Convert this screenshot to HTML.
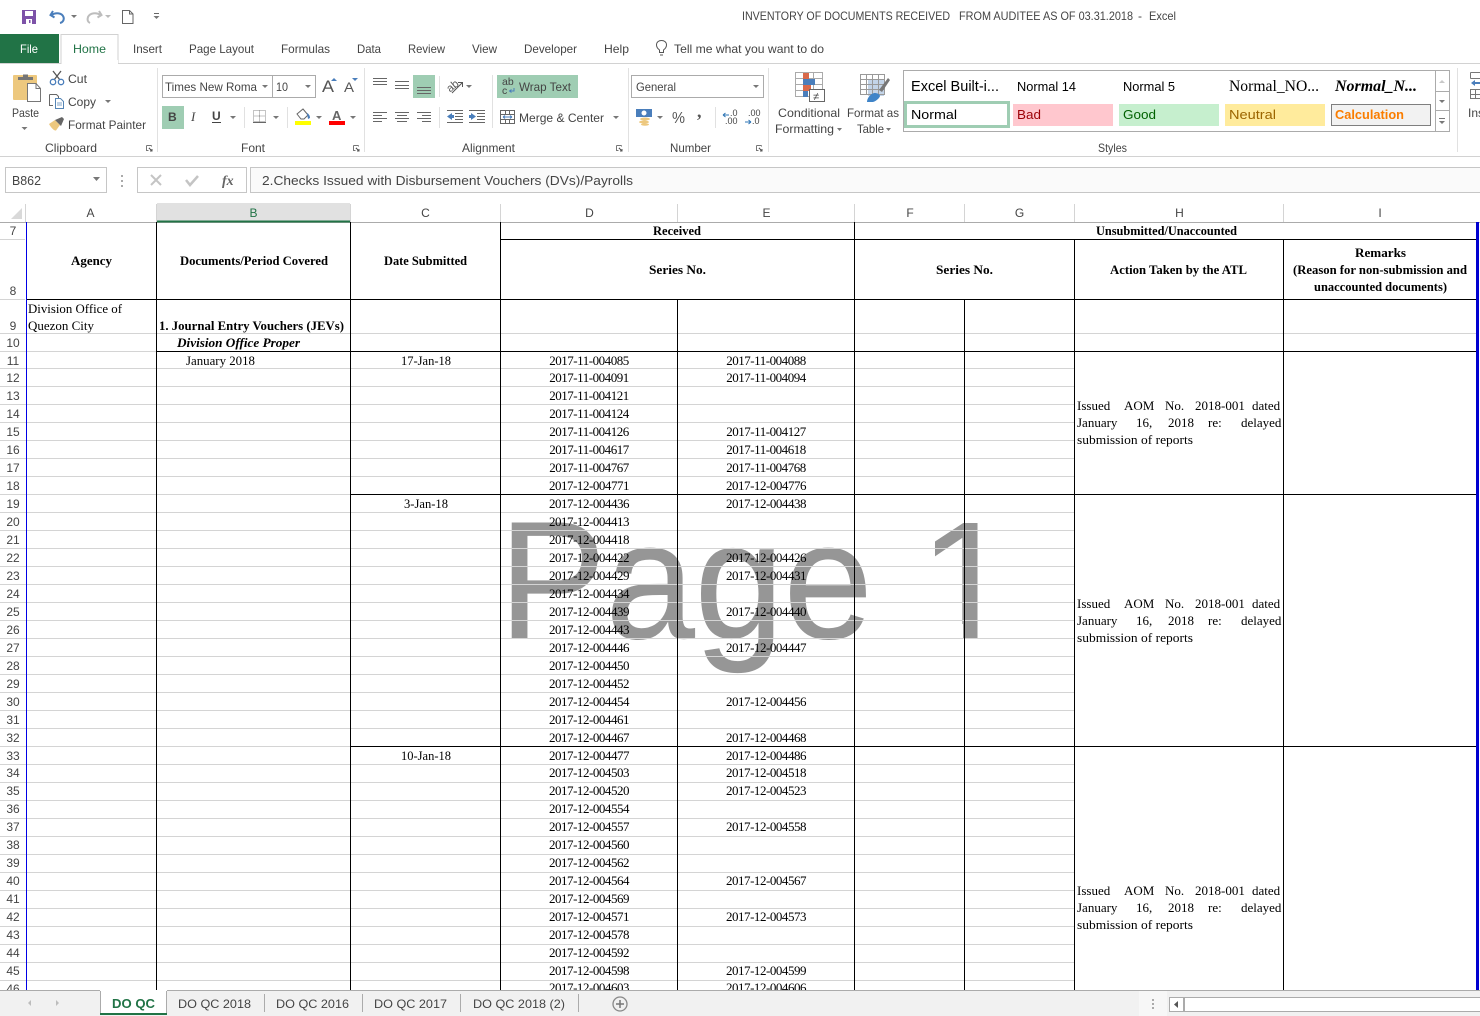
<!DOCTYPE html>
<html><head><meta charset="utf-8"><title>INVENTORY OF DOCUMENTS RECEIVED</title>
<style>
html,body{margin:0;padding:0;background:#fff;width:1480px;height:1016px;overflow:hidden}
svg{display:block}
text{white-space:pre}
.s{font:12px "Liberation Sans",sans-serif;fill:#444}
.t{font:13px "Liberation Serif",serif;fill:#000}
.d{letter-spacing:-.47px;text-anchor:middle}
.b{font:bold 13px "Liberation Serif",serif;fill:#000}
.h{font:12px "Liberation Sans",sans-serif;fill:#444;text-anchor:middle}
.l{shape-rendering:crispEdges}
</style></head><body>
<svg xmlns="http://www.w3.org/2000/svg" width="1480" height="1016" viewBox="0 0 1480 1016">
<defs><path id="c" d="M0 0h6l-3 3z" fill="#777"/>
<clipPath id="one"><rect x="900" y="523" width="77.500" height="101"/><rect x="963" y="620" width="14.500" height="18"/></clipPath></defs>
<rect width="1480" height="1016" fill="#fff"/>

<!-- watermark -->
<g font-family="'Liberation Sans',sans-serif" font-size="160" fill="#969696" stroke="#969696" stroke-width=".8">
<text transform="translate(499 638) scale(1 1.045)">Page</text>
<g clip-path="url(#one)"><text transform="translate(918.500 638) scale(1.1 1.045)">1</text></g></g>

<!-- grey grid -->
<g class="l" stroke="#d4d4d4" fill="none">
<path d="M0 333.5H1476M0 351.5H157M0 239.5H25M0 299.5H25M0 494.5H350M0 746.5H350"/>
<path d="M0 368.5H1074M0 386.5H1074M0 404.5H1074M0 422.5H1074M0 440.5H1074M0 458.5H1074M0 476.5H1074M0 512.5H1074M0 530.5H1074M0 548.5H1074M0 566.5H1074M0 584.5H1074M0 602.5H1074M0 620.5H1074M0 638.5H1074M0 656.5H1074M0 674.5H1074M0 692.5H1074M0 710.5H1074M0 728.5H1074M0 764.5H1074M0 782.5H1074M0 800.5H1074M0 818.5H1074M0 836.5H1074M0 854.5H1074M0 872.5H1074M0 890.5H1074M0 908.5H1074M0 926.5H1074M0 944.5H1074M0 962.5H1074M0 980.5H1074"/>
<path d="M156.500 204V222M350.500 204V222M500.500 204V222M677.500 204V222M854.500 204V222M964.500 204V222M1074.500 204V222M1283.500 204V222M25.500 204V222"/>
</g>
<!-- headers -->
<rect x="157" y="203" width="193" height="18" fill="#e1e1e1"/>
<path d="M11 219h11v-11z" fill="#d9d9d9"/>
<g class="l" fill="none">
<path d="M0 222.500H1480" stroke="#ababab"/>
<path d="M157 221.500H350" stroke="#217346" stroke-width="2"/>
<g stroke="#000">
<path d="M156.500 222V990M350.500 222V990M500.500 222V990M854.500 222V990M677.500 299V990M964.500 299V990M1074.500 239V990M1283.500 239V990"/>
<path d="M27 299.500H1476M500 239.500H1476M157 351.500H1476M350 494.500H1476M350 746.500H1476"/>
</g>
</g>
<rect x="26" y="222" width="1" height="768" fill="#0000e6"/>
<rect x="1476" y="222" width="3" height="768" fill="#0000d0"/>

<g class="h"><text x="90.500" y="217">A</text><text x="253.500" y="217" style="fill:#217346">B</text><text x="425.500" y="217">C</text><text x="589.500" y="217">D</text><text x="766.500" y="217">E</text><text x="910" y="217">F</text><text x="1019.500" y="217">G</text><text x="1179.500" y="217">H</text><text x="1380" y="217">I</text></g>

<!-- row numbers -->
<g class="h">
<text x="13" y="235">7</text><text x="13" y="295">8</text><text x="13" y="330">9</text><text x="13" y="347">10</text><text x="13" y="365">11</text><text x="13" y="382">12</text><text x="13" y="400">13</text><text x="13" y="418">14</text><text x="13" y="436">15</text><text x="13" y="454">16</text><text x="13" y="472">17</text><text x="13" y="490">18</text><text x="13" y="508">19</text><text x="13" y="526">20</text><text x="13" y="544">21</text><text x="13" y="562">22</text><text x="13" y="580">23</text><text x="13" y="598">24</text><text x="13" y="616">25</text><text x="13" y="634">26</text><text x="13" y="652">27</text><text x="13" y="670">28</text><text x="13" y="688">29</text><text x="13" y="706">30</text><text x="13" y="724">31</text><text x="13" y="742">32</text><text x="13" y="760">33</text><text x="13" y="777">34</text><text x="13" y="795">35</text><text x="13" y="813">36</text><text x="13" y="831">37</text><text x="13" y="849">38</text><text x="13" y="867">39</text><text x="13" y="885">40</text><text x="13" y="903">41</text><text x="13" y="921">42</text><text x="13" y="939">43</text><text x="13" y="957">44</text><text x="13" y="975">45</text><text x="13" y="993">46</text>
</g>

<!-- header cells -->
<g class="b">
<text x="71" y="265" textLength="41" lengthAdjust="spacingAndGlyphs">Agency</text>
<text x="180" y="265" textLength="148" lengthAdjust="spacingAndGlyphs">Documents/Period Covered</text>
<text x="384" y="265" textLength="83" lengthAdjust="spacingAndGlyphs">Date Submitted</text>
<text x="653" y="235" textLength="48" lengthAdjust="spacingAndGlyphs">Received</text>
<text x="1096" y="235" textLength="141" lengthAdjust="spacingAndGlyphs">Unsubmitted/Unaccounted</text>
<text x="649" y="274" textLength="57" lengthAdjust="spacingAndGlyphs">Series No.</text>
<text x="936" y="274" textLength="57" lengthAdjust="spacingAndGlyphs">Series No.</text>
<text x="1110" y="274" textLength="137" lengthAdjust="spacingAndGlyphs">Action Taken by the ATL</text>
<text x="1355" y="257" textLength="51" lengthAdjust="spacingAndGlyphs">Remarks</text>
<text x="1293" y="274" textLength="174" lengthAdjust="spacingAndGlyphs">(Reason for non-submission and</text>
<text x="1314" y="291" textLength="133" lengthAdjust="spacingAndGlyphs">unaccounted documents)</text>
</g>
<text class="t" x="28" y="313" textLength="94" lengthAdjust="spacingAndGlyphs">Division Office of</text>
<text class="t" x="28" y="330" textLength="66" lengthAdjust="spacingAndGlyphs">Quezon City</text>
<text class="b" x="159" y="330" textLength="185" lengthAdjust="spacingAndGlyphs">1. Journal Entry Vouchers (JEVs)</text>
<text class="b" x="177" y="347" style="font-style:italic" textLength="123" lengthAdjust="spacingAndGlyphs">Division Office Proper</text>
<text class="t" x="186" y="365" textLength="69" lengthAdjust="spacingAndGlyphs">January 2018</text>
<g class="t"><text x="401" y="365" textLength="50" lengthAdjust="spacingAndGlyphs">17-Jan-18</text><text x="404" y="508" textLength="44" lengthAdjust="spacingAndGlyphs">3-Jan-18</text><text x="401" y="760" textLength="50" lengthAdjust="spacingAndGlyphs">10-Jan-18</text></g>

<!-- D column -->
<g class="t d">
<text x="589" y="365">2017-11-004085</text><text x="589" y="382">2017-11-004091</text><text x="589" y="400">2017-11-004121</text><text x="589" y="418">2017-11-004124</text><text x="589" y="436">2017-11-004126</text><text x="589" y="454">2017-11-004617</text><text x="589" y="472">2017-11-004767</text><text x="589" y="490">2017-12-004771</text><text x="589" y="508">2017-12-004436</text><text x="589" y="526">2017-12-004413</text><text x="589" y="544">2017-12-004418</text><text x="589" y="562">2017-12-004422</text><text x="589" y="580">2017-12-004429</text><text x="589" y="598">2017-12-004434</text><text x="589" y="616">2017-12-004439</text><text x="589" y="634">2017-12-004443</text><text x="589" y="652">2017-12-004446</text><text x="589" y="670">2017-12-004450</text><text x="589" y="688">2017-12-004452</text><text x="589" y="706">2017-12-004454</text><text x="589" y="724">2017-12-004461</text><text x="589" y="742">2017-12-004467</text><text x="589" y="760">2017-12-004477</text><text x="589" y="777">2017-12-004503</text><text x="589" y="795">2017-12-004520</text><text x="589" y="813">2017-12-004554</text><text x="589" y="831">2017-12-004557</text><text x="589" y="849">2017-12-004560</text><text x="589" y="867">2017-12-004562</text><text x="589" y="885">2017-12-004564</text><text x="589" y="903">2017-12-004569</text><text x="589" y="921">2017-12-004571</text><text x="589" y="939">2017-12-004578</text><text x="589" y="957">2017-12-004592</text><text x="589" y="975">2017-12-004598</text><text x="589" y="992">2017-12-004603</text>
<!-- E column -->
<text x="766" y="365">2017-11-004088</text><text x="766" y="382">2017-11-004094</text><text x="766" y="436">2017-11-004127</text><text x="766" y="454">2017-11-004618</text><text x="766" y="472">2017-11-004768</text><text x="766" y="490">2017-12-004776</text><text x="766" y="508">2017-12-004438</text><text x="766" y="562">2017-12-004426</text><text x="766" y="580">2017-12-004431</text><text x="766" y="616">2017-12-004440</text><text x="766" y="652">2017-12-004447</text><text x="766" y="706">2017-12-004456</text><text x="766" y="742">2017-12-004468</text><text x="766" y="760">2017-12-004486</text><text x="766" y="777">2017-12-004518</text><text x="766" y="795">2017-12-004523</text><text x="766" y="831">2017-12-004558</text><text x="766" y="885">2017-12-004567</text><text x="766" y="921">2017-12-004573</text><text x="766" y="975">2017-12-004599</text><text x="766" y="992">2017-12-004606</text>
</g>

<!-- H merged text -->
<g class="t">
<text y="410"><tspan x="1077">Issued</tspan><tspan x="1124">AOM</tspan><tspan x="1165">No.</tspan><tspan x="1195">2018-001</tspan><tspan x="1252">dated</tspan></text>
<text y="427"><tspan x="1077">January</tspan><tspan x="1136">16,</tspan><tspan x="1168">2018</tspan><tspan x="1208">re:</tspan><tspan x="1241">delayed</tspan></text>
<text x="1077" y="444" textLength="116" lengthAdjust="spacingAndGlyphs">submission of reports</text>
<text y="608"><tspan x="1077">Issued</tspan><tspan x="1124">AOM</tspan><tspan x="1165">No.</tspan><tspan x="1195">2018-001</tspan><tspan x="1252">dated</tspan></text>
<text y="625"><tspan x="1077">January</tspan><tspan x="1136">16,</tspan><tspan x="1168">2018</tspan><tspan x="1208">re:</tspan><tspan x="1241">delayed</tspan></text>
<text x="1077" y="642" textLength="116" lengthAdjust="spacingAndGlyphs">submission of reports</text>
<text y="895"><tspan x="1077">Issued</tspan><tspan x="1124">AOM</tspan><tspan x="1165">No.</tspan><tspan x="1195">2018-001</tspan><tspan x="1252">dated</tspan></text>
<text y="912"><tspan x="1077">January</tspan><tspan x="1136">16,</tspan><tspan x="1168">2018</tspan><tspan x="1208">re:</tspan><tspan x="1241">delayed</tspan></text>
<text x="1077" y="929" textLength="116" lengthAdjust="spacingAndGlyphs">submission of reports</text>
</g>

<!-- ========== top chrome ========== -->
<rect y="0" width="1480" height="203" fill="#fff"/>
<g class="s">
<text x="742" y="20" textLength="208" lengthAdjust="spacingAndGlyphs">INVENTORY OF DOCUMENTS RECEIVED</text>
<text x="959" y="20" textLength="174" lengthAdjust="spacingAndGlyphs">FROM AUDITEE AS OF 03.31.2018</text>
<text x="1138" y="20">-</text>
<text x="1149" y="20" textLength="27" lengthAdjust="spacingAndGlyphs">Excel</text>
</g>

<!-- QAT -->
<path d="M22 10h14v14H22z" fill="#7d52a8"/><rect x="25" y="11" width="8" height="5" fill="#fff"/><rect x="26" y="19" width="6" height="5" fill="#fff"/><rect x="29" y="20" width="1.500" height="3" fill="#7d52a8"/>
<path d="M53 11l-2.500 4 4 2.500M51.500 15C56 12 62 13 63.500 17c1 3-1 5.500-3.500 6" fill="none" stroke="#4a7ebb" stroke-width="2"/>
<use href="#c" x="71" y="15"/>
<path d="M99 11l2.500 4-4 2.500M100.500 15C96 12 90 13 88 17c-1 3 0 5 2 6" fill="none" stroke="#bdbdbd" stroke-width="2"/>
<use href="#c" x="105" y="15" opacity=".5"/>
<path d="M122.500 10.500h7l3.500 3.500v9.500h-10.500zM129.500 10.500v3.500h3.500" fill="#fff" stroke="#666"/>
<path d="M154 13.500h5" stroke="#666" class="l"/><use href="#c" x="153.500" y="16"/>

<!-- Tabs -->
<rect x="0" y="34" width="59" height="29" fill="#217346"/>
<text x="20" y="53" font-family="'Liberation Sans',sans-serif" font-size="12" fill="#fff" textLength="18" lengthAdjust="spacingAndGlyphs">File</text>
<path class="l" d="M0 63.500H61V34.500H118V63.500H1480" fill="#fff" stroke="#d2d2d2"/>
<rect x="62" y="60" width="56" height="5" fill="#fff"/>
<text x="73" y="53" font-family="'Liberation Sans',sans-serif" font-size="12" fill="#217346" textLength="33" lengthAdjust="spacingAndGlyphs">Home</text>
<g class="s">
<text x="133" y="53" textLength="29" lengthAdjust="spacingAndGlyphs">Insert</text>
<text x="189" y="53" textLength="65" lengthAdjust="spacingAndGlyphs">Page Layout</text>
<text x="281" y="53" textLength="49" lengthAdjust="spacingAndGlyphs">Formulas</text>
<text x="357" y="53" textLength="24" lengthAdjust="spacingAndGlyphs">Data</text>
<text x="408" y="53" textLength="37" lengthAdjust="spacingAndGlyphs">Review</text>
<text x="472" y="53" textLength="25" lengthAdjust="spacingAndGlyphs">View</text>
<text x="524" y="53" textLength="53" lengthAdjust="spacingAndGlyphs">Developer</text>
<text x="604" y="53" textLength="25" lengthAdjust="spacingAndGlyphs">Help</text>
<text x="674" y="53" textLength="150" lengthAdjust="spacingAndGlyphs">Tell me what you want to do</text>
</g>
<path d="M659.500 50c-2-1.500-3-3-3-5 0-3 2.300-4.500 5-4.500s5 1.500 5 4.500c0 2-1 3.500-3 5v2.500h-4zM660 55h3" fill="none" stroke="#555" stroke-width="1"/>

<!-- Ribbon separators/bottom -->
<g class="l" stroke="#e1e1e1" fill="none"><path d="M157.500 68V152M364.500 68V152M628.500 68V152M768.500 68V152M1457.500 68V152"/></g>
<path class="l" d="M0 156.500H1480" stroke="#d2d2d2"/>

<!-- Clipboard -->
<rect x="13" y="75" width="24" height="25" rx="1" fill="#edc87e"/>
<path d="M18 80v-3h5v-2.500h5V77h5v3z" fill="#757575"/>
<path d="M27.500 83.500h8.500l4.500 5v13h-13z" fill="#fff" stroke="#777"/><path d="M36 83.500v5h4.500" fill="none" stroke="#777"/>
<text class="s" x="12" y="117" textLength="27" lengthAdjust="spacingAndGlyphs">Paste</text>
<use href="#c" x="21.500" y="127"/>
<g fill="none" stroke="#555" stroke-width="1.300"><path d="M53 71l7 9M61 71l-7 9"/></g>
<circle cx="53" cy="82" r="2.700" fill="none" stroke="#4a7ebb" stroke-width="1.300"/><circle cx="61" cy="82" r="2.700" fill="none" stroke="#4a7ebb" stroke-width="1.300"/>
<text class="s" x="68" y="83" textLength="19" lengthAdjust="spacingAndGlyphs">Cut</text>
<path d="M49.500 94.500h7l2 2v2M53 105.500h-3.500v-11" fill="#fff" stroke="#666"/>
<path d="M55.500 98.500h5l3 3v7h-8z" fill="#fff" stroke="#5585b5"/><path d="M57 103h5M57 105h5" stroke="#5585b5" stroke-width=".8"/>
<text class="s" x="68" y="106" textLength="28" lengthAdjust="spacingAndGlyphs">Copy</text>
<use href="#c" x="105" y="100"/>
<path d="M49 124l6-4 5 5-4 5.500c-2 .5-5-3-7-6.500z" fill="#edc87e"/><path d="M55 120l7-3 2 2-3 7z" fill="#666"/>
<text class="s" x="68" y="129" textLength="78" lengthAdjust="spacingAndGlyphs">Format Painter</text>
<text class="s" x="45" y="152" textLength="52" lengthAdjust="spacingAndGlyphs">Clipboard</text>
<g id="dl" fill="none" stroke="#777" class="l"><path d="M146.500 145.500h5M146.500 145.500v5h2M151.500 145.500v1"/><path d="M149 148l3 3M152 149v2h-2" stroke="#555"/></g>

<!-- Font -->
<rect x="162.500" y="75.500" width="110" height="22" fill="#fff" stroke="#ababab" class="l"/>
<rect x="272.500" y="75.500" width="43" height="22" fill="#fff" stroke="#ababab" class="l"/>
<text class="s" x="165" y="91" textLength="92" lengthAdjust="spacingAndGlyphs">Times New Roma</text>
<use href="#c" x="262" y="85"/>
<text class="s" x="276" y="91" textLength="12" lengthAdjust="spacingAndGlyphs">10</text>
<use href="#c" x="305" y="85"/>
<text x="322" y="92" font-family="'Liberation Sans',sans-serif" font-size="17" fill="#555" textLength="12" lengthAdjust="spacingAndGlyphs">A</text><path d="M331 81l3-3 3 3z" fill="#4a7ebb"/>
<text x="344" y="92" font-family="'Liberation Sans',sans-serif" font-size="14" fill="#555" textLength="10" lengthAdjust="spacingAndGlyphs">A</text><path d="M352 78h6l-3 3z" fill="#4a7ebb"/>
<rect x="162" y="106" width="22" height="23" fill="#9fcdb3"/>
<text x="168" y="121" font-family="'Liberation Sans',sans-serif" font-size="12" font-weight="bold" fill="#444">B</text>
<text x="191" y="121" font-family="'Liberation Serif',serif" font-size="13" font-style="italic" fill="#444">I</text>
<text x="212" y="120" font-family="'Liberation Sans',sans-serif" font-size="12" font-weight="bold" fill="#444">U</text><rect x="212" y="122" width="9" height="1" fill="#444"/>
<use href="#c" x="230" y="116"/>
<path class="l" d="M244.500 107V128M287.500 107V128" stroke="#e1e1e1"/>
<path class="l" d="M253.500 110.500h12v11h-12zM259.500 110.500v11M253.500 116h12" fill="none" stroke="#888" stroke-dasharray="1 1"/><rect x="253" y="122" width="13" height="1" fill="#666"/>
<use href="#c" x="273" y="116"/>
<path d="M297 114l6-5 5 6-4 4h-3z" fill="#fff" stroke="#666"/><path d="M307 113c2 1 3 3 3 5l-2 1z" fill="#4a7ebb"/>
<rect x="295" y="121" width="16" height="4" fill="#ff0"/>
<use href="#c" x="316" y="116"/>
<text x="332" y="120" font-family="'Liberation Sans',sans-serif" font-size="13" font-weight="bold" fill="#666">A</text>
<rect x="329" y="121" width="16" height="4" fill="#f00"/>
<use href="#c" x="350" y="116"/>
<text class="s" x="241" y="152" textLength="24" lengthAdjust="spacingAndGlyphs">Font</text>
<use href="#dl" x="207"/>

<!-- Alignment -->
<rect x="413" y="75" width="22" height="23" fill="#9fcdb3"/>
<g class="l" stroke="#666" fill="none">
<path d="M373 78.500h14M373 81.500h14M373 84.500h14"/>
<path d="M395 81.500h14M395 85.500h14M395 88.500h14"/>
<path d="M417 87.500h14M417 90.500h14M417 93.500h14"/>
<path d="M373 112.500h14M373 115.500h9M373 118.500h14M373 121.500h9"/>
<path d="M395 112.500h14M397 115.500h10M395 118.500h14M397 121.500h10"/>
<path d="M417 112.500h14M422 115.500h9M417 118.500h14M422 121.500h9"/>
<path d="M447 110.500h16M455 113.500h8M455 116.500h8M455 119.500h8M447 122.500h16"/>
<path d="M469 110.500h16M477 113.500h8M477 116.500h8M477 119.500h8M469 122.500h16"/>
</g>
<path d="M447 116.500l5-3.500v2h2v3h-2v2z" fill="#4a7ebb"/><path d="M476 116.500l-5-3.500v2h-2v3h2v2z" fill="#4a7ebb"/>
<path class="l" d="M439.500 76V97M439.500 107V128M492.500 75V128" stroke="#e1e1e1"/>
<g transform="rotate(-40 455 86)"><text x="447" y="88" font-family="'Liberation Sans',sans-serif" font-size="11" fill="#555">ab</text></g>
<path d="M452 93l10-10M458 82.500h4.500v4.500" fill="none" stroke="#555"/>
<use href="#c" x="466" y="85"/>
<rect x="497" y="75" width="81" height="23" fill="#9fcdb3"/>
<text x="502" y="85" font-family="'Liberation Sans',sans-serif" font-size="10.500" fill="#444">ab</text><text x="502" y="94" font-family="'Liberation Sans',sans-serif" font-size="10.500" fill="#444">c</text>
<path d="M514 88v3h-4M511.500 89.500l-2 1.500 2 1.500" fill="none" stroke="#4a7ebb"/>
<text class="s" x="519" y="91" textLength="52" lengthAdjust="spacingAndGlyphs">Wrap Text</text>
<path class="l" d="M500.500 110.500h14v13h-14zM500.500 114.500h14M500.500 119.500h14M505.500 110.500v4M509.500 110.500v4M505.500 119.500v4M509.500 119.500v4" fill="#fff" stroke="#666"/>
<path d="M503 117h9M503 117l2-1.500M503 117l2 1.500M512 117l-2-1.500M512 117l-2 1.500" fill="none" stroke="#4a7ebb"/>
<text class="s" x="519" y="122" textLength="85" lengthAdjust="spacingAndGlyphs">Merge &amp; Center</text>
<use href="#c" x="613" y="116"/>
<text class="s" x="462" y="152" textLength="53" lengthAdjust="spacingAndGlyphs">Alignment</text>
<use href="#dl" x="470"/>

<!-- Number -->
<rect x="631.500" y="75.500" width="132" height="22" fill="#fff" stroke="#ababab" class="l"/>
<text class="s" x="636" y="91" textLength="40" lengthAdjust="spacingAndGlyphs">General</text>
<use href="#c" x="753" y="85"/>
<rect x="636" y="109" width="16" height="8" fill="#4a7ebb"/><circle cx="644" cy="113" r="2.500" fill="#fff"/>
<ellipse cx="645" cy="119" rx="5" ry="1.500" fill="#edc87e"/><ellipse cx="644" cy="122" rx="5" ry="1.500" fill="#edc87e"/><ellipse cx="645" cy="124.500" rx="4" ry="1.300" fill="#edc87e"/>
<use href="#c" x="657" y="116"/>
<text x="672" y="123" font-family="'Liberation Sans',sans-serif" font-size="16" fill="#555" textLength="13" lengthAdjust="spacingAndGlyphs">%</text>
<text x="697" y="117" font-family="'Liberation Serif',serif" font-size="18" font-weight="bold" fill="#555">,</text>
<path class="l" d="M715.500 107V128" stroke="#e1e1e1"/>
<text x="730" y="116" font-family="'Liberation Sans',sans-serif" font-size="9" fill="#444">.0</text><text x="725" y="124" font-family="'Liberation Sans',sans-serif" font-size="9" fill="#444">.00</text>
<path d="M723 115h6M723 115l2.500-2M723 115l2.500 2" fill="none" stroke="#2e75b6"/>
<text x="748" y="116" font-family="'Liberation Sans',sans-serif" font-size="9" fill="#444">.00</text><text x="752" y="124" font-family="'Liberation Sans',sans-serif" font-size="9" fill="#444">.0</text>
<path d="M745 122h6M751 122l-2.500-2M751 122l-2.500 2" fill="none" stroke="#2e75b6"/>
<text class="s" x="670" y="152" textLength="41" lengthAdjust="spacingAndGlyphs">Number</text>
<use href="#dl" x="610"/>

<!-- Conditional Formatting -->
<path class="l" d="M795.500 72.500h27v24h-27zM795.500 78.500h27M795.500 84.500h27M795.500 90.500h27M804.500 72.500v24M813.500 72.500v24" fill="#fff" stroke="#aaa"/>
<rect x="803" y="73" width="6" height="6" fill="#d9694a"/><rect x="803" y="79" width="12" height="6" fill="#4a7ebb"/><rect x="803" y="85" width="8" height="6" fill="#d9694a"/><rect x="803" y="91" width="5" height="6" fill="#4a7ebb"/>
<rect x="809.500" y="89.500" width="15" height="12" fill="#fff" stroke="#666" class="l"/>
<text x="813" y="100" font-family="'Liberation Sans',sans-serif" font-size="11" fill="#444">≠</text>
<text class="s" x="778" y="117" textLength="62" lengthAdjust="spacingAndGlyphs">Conditional</text>
<text class="s" x="775" y="133" textLength="59" lengthAdjust="spacingAndGlyphs">Formatting</text>
<path d="M837 128h5l-2.500 3z" fill="#777"/>
<!-- Format as Table -->
<rect x="860" y="75" width="24" height="21" fill="#fff"/>
<rect x="868" y="80" width="16" height="16" fill="#c3d4e8"/>
<path class="l" d="M860.500 74.500h24v20h-24zM860.500 79.500h24M860.500 84.500h24M860.500 89.500h24M866.500 74.500v20M872.500 74.500v20M878.500 74.500v20" fill="none" stroke="#999"/>
<path d="M879 90l9-12 2 2-8 12z" fill="#777"/><path d="M867 102c0-4 4-9 8-9 3 0 5 2 5 3s-3 5-7 6z" fill="#3f84c8"/>
<text class="s" x="847" y="117" textLength="52" lengthAdjust="spacingAndGlyphs">Format as</text>
<text class="s" x="857" y="133" textLength="27" lengthAdjust="spacingAndGlyphs">Table</text>
<path d="M886 128h5l-2.500 3z" fill="#777"/>

<!-- Styles gallery -->
<rect x="903.500" y="70.500" width="546" height="61" fill="#fff" stroke="#ababab" class="l"/>
<rect x="905.500" y="102.500" width="103" height="24" fill="#fff" stroke="#9fcdb3" stroke-width="3" class="l"/>
<text x="911" y="91" font-family="'Liberation Sans',sans-serif" font-size="14.500" fill="#000" textLength="88" lengthAdjust="spacingAndGlyphs">Excel Built-i...</text>
<text x="911" y="119" font-family="'Liberation Sans',sans-serif" font-size="13" fill="#000" textLength="46" lengthAdjust="spacingAndGlyphs">Normal</text>
<rect x="1013" y="104" width="100" height="22" fill="#ffc7ce"/>
<rect x="1119" y="104" width="100" height="22" fill="#c6efce"/>
<rect x="1225" y="104" width="100" height="22" fill="#ffeb9c"/>
<rect x="1331.500" y="104.500" width="99" height="21" fill="#f2f2f2" stroke="#7f7f7f" class="l"/>
<g font-family="'Liberation Sans',sans-serif" font-size="13">
<text x="1017" y="119" fill="#9c0006" textLength="24" lengthAdjust="spacingAndGlyphs">Bad</text>
<text x="1123" y="119" fill="#006100" textLength="33" lengthAdjust="spacingAndGlyphs">Good</text>
<text x="1229" y="119" fill="#9c6500" textLength="47" lengthAdjust="spacingAndGlyphs">Neutral</text>
<text x="1335" y="119" fill="#fa7d00" font-weight="bold" textLength="69" lengthAdjust="spacingAndGlyphs">Calculation</text>
<text x="1017" y="91" fill="#000" font-size="12.500" textLength="59" lengthAdjust="spacingAndGlyphs">Normal 14</text>
<text x="1123" y="91" fill="#000" font-size="12.500" textLength="52" lengthAdjust="spacingAndGlyphs">Normal 5</text>
</g>
<text x="1229" y="91" font-family="'Liberation Serif',serif" font-size="16" fill="#000" textLength="90" lengthAdjust="spacingAndGlyphs">Normal_NO...</text>
<text x="1335" y="91" font-family="'Liberation Serif',serif" font-size="16" font-weight="bold" font-style="italic" fill="#000" textLength="82" lengthAdjust="spacingAndGlyphs">Normal_N...</text>
<path class="l" d="M1435.500 70V131M1436 91.500H1450M1436 110.500H1450" stroke="#ababab"/>
<path d="M1439 83l3-3 3 3z" fill="#c8c8c8"/><path d="M1439 100h6l-3 3z" fill="#777"/>
<path class="l" d="M1439 118.500h6" stroke="#777"/><path d="M1439 121h6l-3 3z" fill="#777"/>
<text class="s" x="1098" y="152" textLength="29" lengthAdjust="spacingAndGlyphs">Styles</text>

<!-- Insert -->
<path class="l" d="M1470.500 72.500h10M1470.500 72.500v6M1470.500 78.500h10M1470.500 89.500h10v9h-10zM1475.500 89.500v9M1470.500 94.500h10" fill="none" stroke="#777"/>
<path d="M1471 83l4-3v2h5v2h-5v2z" fill="#4a7ebb"/>
<text class="s" x="1468" y="117">Ins</text>

<!-- Formula bar -->
<rect x="5.500" y="167.500" width="101" height="25" fill="#fff" stroke="#c6c6c6" class="l"/>
<text class="s" x="12" y="185" style="font-size:13px" textLength="29" lengthAdjust="spacingAndGlyphs">B862</text>
<path d="M93 177h7l-3.500 4z" fill="#777"/>
<g fill="#aaa"><rect x="121" y="175" width="2" height="2"/><rect x="121" y="180" width="2" height="2"/><rect x="121" y="185" width="2" height="2"/></g>
<rect x="137.500" y="167.500" width="109" height="25" fill="#fff" stroke="#c6c6c6" class="l"/>
<path d="M151 175l10 10M161 175l-10 10" stroke="#c4c4c4" stroke-width="2"/>
<path d="M186 180l4 5 8-9" fill="none" stroke="#c4c4c4" stroke-width="2.500"/>
<text x="222" y="185" font-family="'Liberation Serif',serif" font-size="14" font-style="italic" font-weight="bold" fill="#666">fx</text>
<rect x="250.500" y="167.500" width="1232" height="25" fill="#fafafa" stroke="#c6c6c6" class="l"/>
<text class="s" x="262" y="185" textLength="371" lengthAdjust="spacingAndGlyphs" style="font-size:13px">2.Checks Issued with Disbursement Vouchers (DVs)/Payrolls</text>

<!-- ========== bottom bar ========== -->
<rect x="0" y="990" width="1480" height="26" fill="#f1f1f1"/>
<path class="l" d="M0 990.500H1480" stroke="#ababab"/>
<path d="M31 1000v6l-3-3z" fill="#bdbdbd"/><path d="M56 1000v6l3-3z" fill="#bdbdbd"/>
<rect x="100" y="990" width="67" height="24" fill="#fff"/>
<path class="l" d="M100.500 991V1014M166.500 991V1014" stroke="#ababab"/>
<rect x="100" y="1013" width="67" height="2" fill="#217346"/>
<text x="112" y="1008" font-family="'Liberation Sans',sans-serif" font-size="13" font-weight="bold" fill="#217346" textLength="43" lengthAdjust="spacingAndGlyphs">DO QC</text>
<g class="s">
<text x="178" y="1008" textLength="73" lengthAdjust="spacingAndGlyphs">DO QC 2018</text>
<text x="276" y="1008" textLength="73" lengthAdjust="spacingAndGlyphs">DO QC 2016</text>
<text x="374" y="1008" textLength="73" lengthAdjust="spacingAndGlyphs">DO QC 2017</text>
<text x="473" y="1008" textLength="92" lengthAdjust="spacingAndGlyphs">DO QC 2018 (2)</text>
</g>
<path class="l" d="M264.500 994V1012M362.500 994V1012M460.500 994V1012M578.500 994V1012" stroke="#ababab"/>
<circle cx="620" cy="1004" r="7" fill="none" stroke="#888" stroke-width="1.300"/><path d="M616 1004h8M620 1000v8" stroke="#777" stroke-width="1.500"/>
<rect x="1139" y="991" width="28" height="25" fill="#f7f7f7"/>
<g fill="#aaa"><rect x="1152" y="999" width="2" height="2"/><rect x="1152" y="1003" width="2" height="2"/><rect x="1152" y="1007" width="2" height="2"/></g>
<rect x="1169.500" y="997.500" width="320" height="14" fill="#fff" stroke="#ababab" class="l"/>
<rect x="1183" y="998" width="2" height="13" fill="#ababab"/>
<path d="M1178 1001v7l-4-3.500z" fill="#555"/>
</svg>
</body></html>
